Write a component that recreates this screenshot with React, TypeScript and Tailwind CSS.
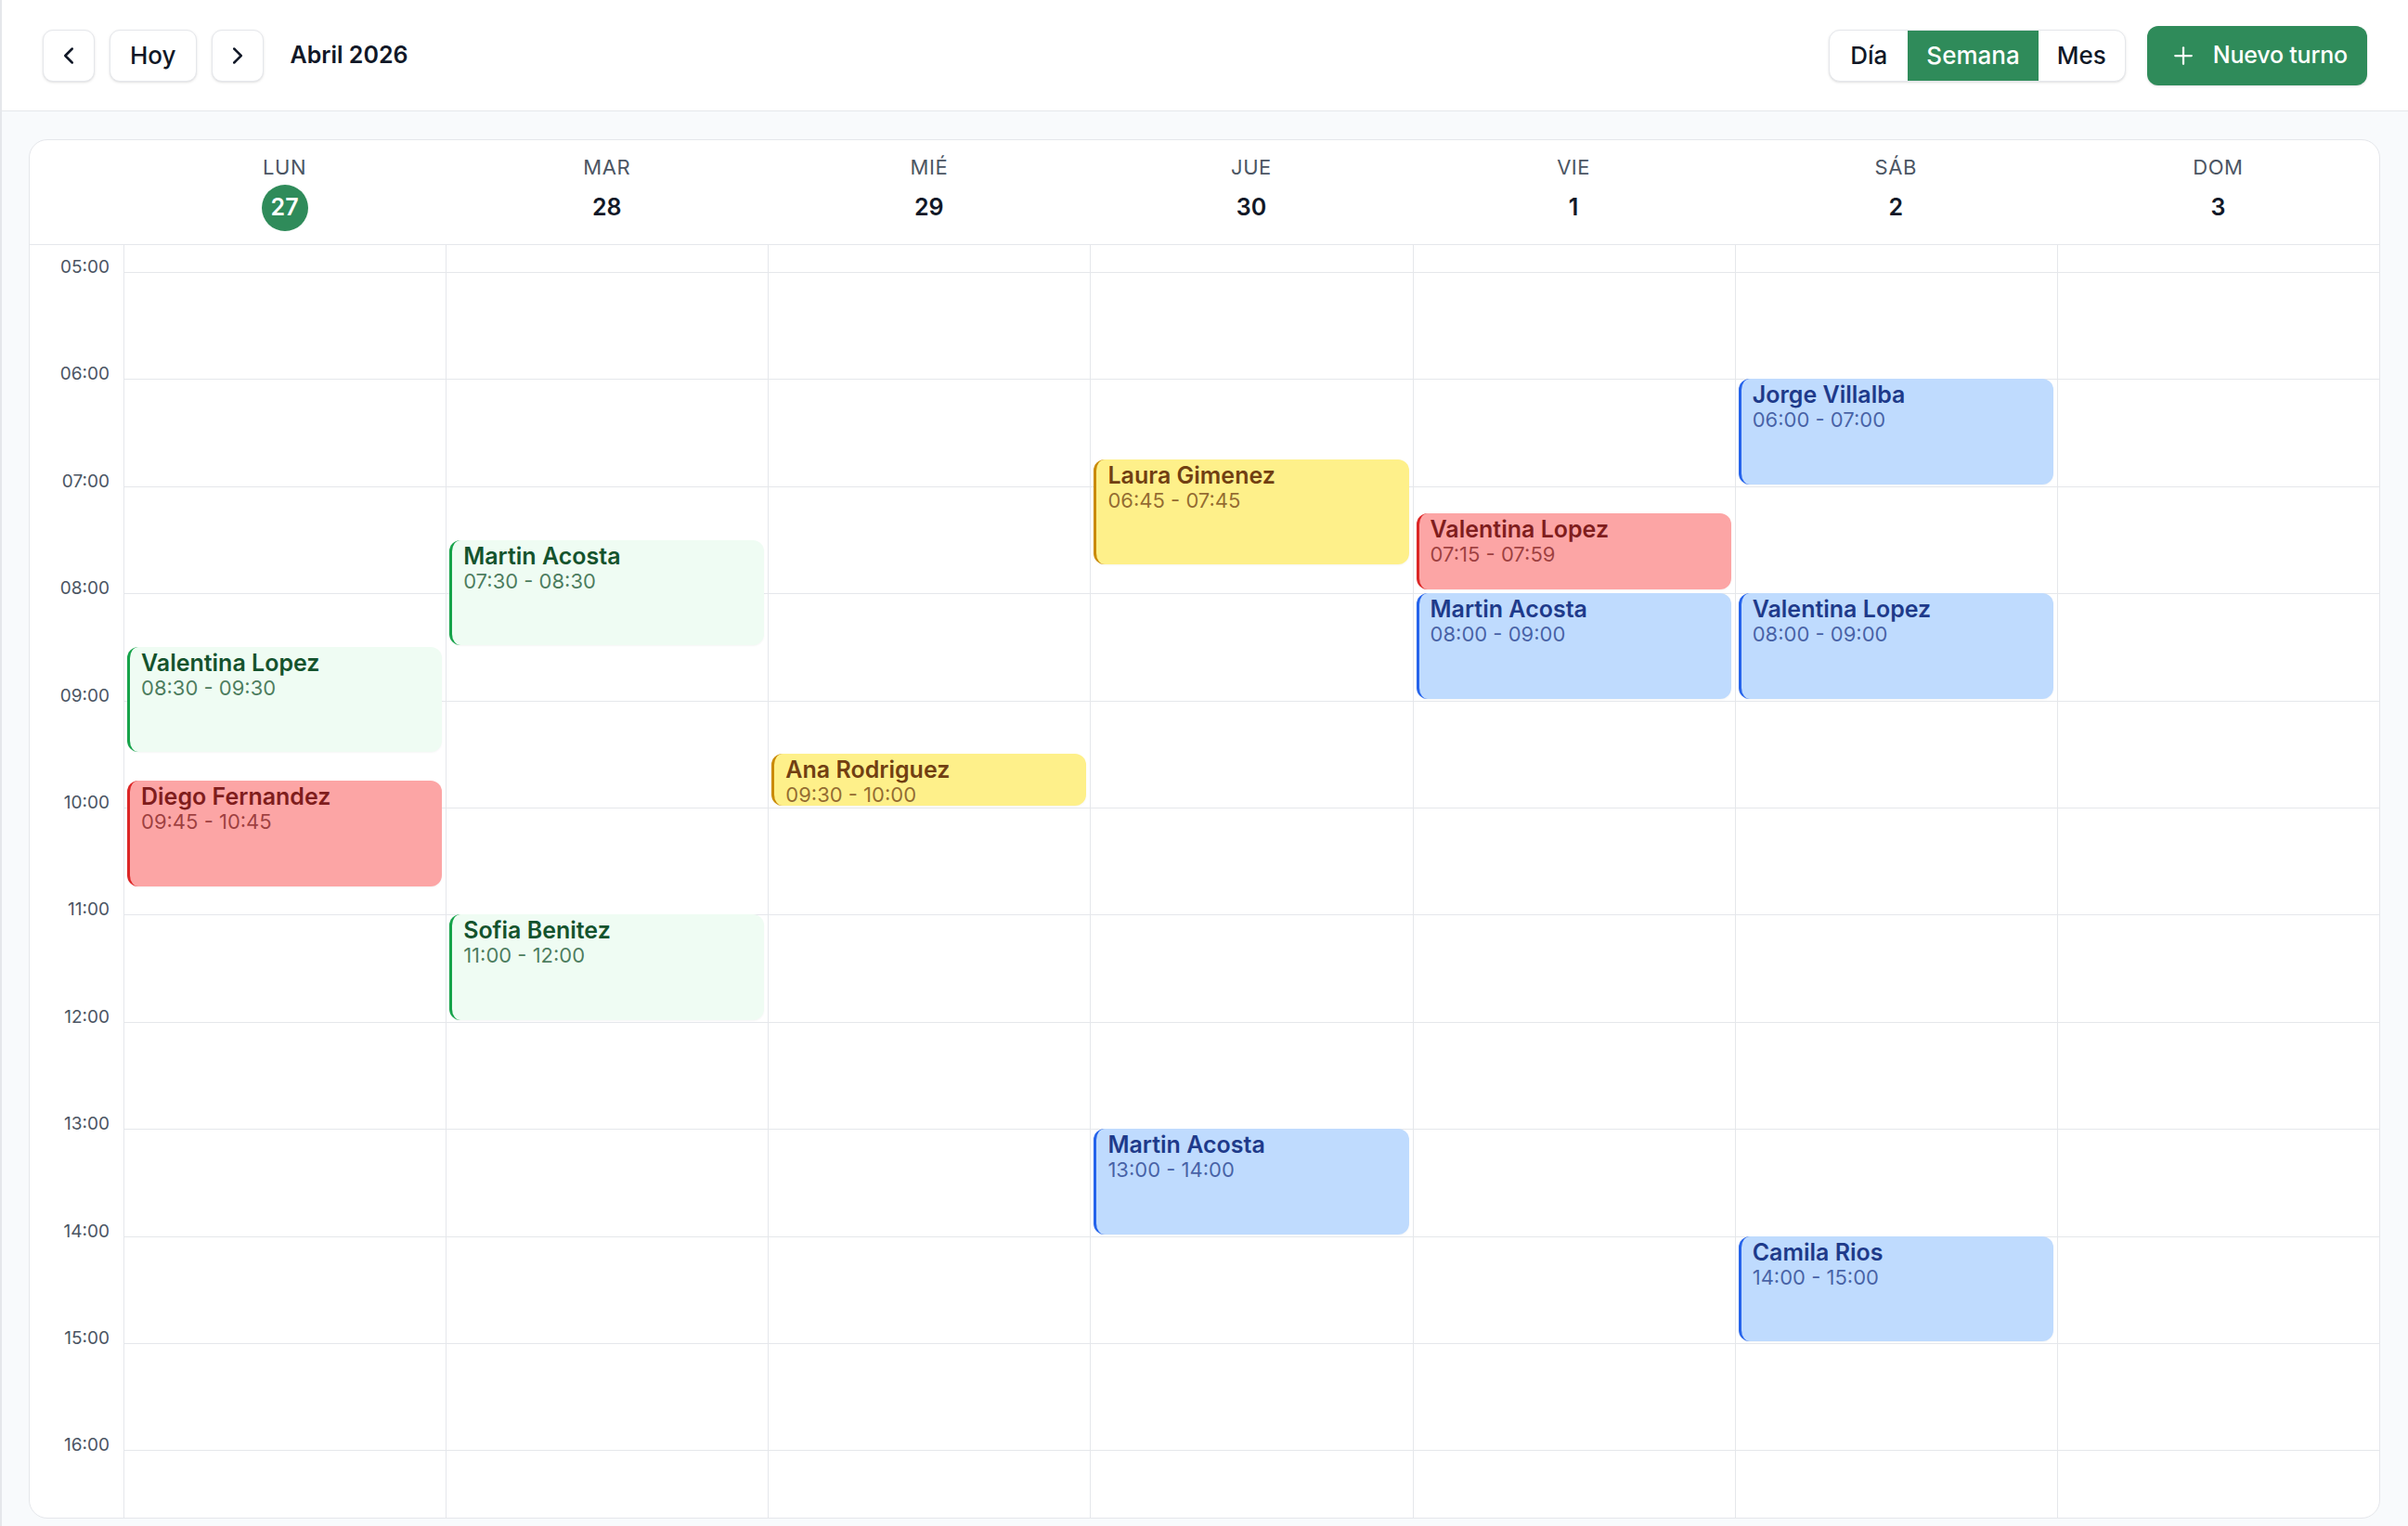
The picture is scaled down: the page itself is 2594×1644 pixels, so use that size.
import { ChevronLeft, ChevronRight, Plus } from "lucide-react";

type Tone = "green" | "red" | "yellow" | "blue";

interface Turno {
  day: number;
  name: string;
  start: string;
  end: string;
  tone: Tone;
}

const HOUR = 115.4;
const GRID_TOP = 29;
const FIRST_HOUR = 5;

const days = [
  { label: "LUN", num: "27", today: true },
  { label: "MAR", num: "28" },
  { label: "MIÉ", num: "29" },
  { label: "JUE", num: "30" },
  { label: "VIE", num: "1" },
  { label: "SÁB", num: "2" },
  { label: "DOM", num: "3" },
];

const hours = ["05:00", "06:00", "07:00", "08:00", "09:00", "10:00", "11:00", "12:00", "13:00", "14:00", "15:00", "16:00"];

const turnos: Turno[] = [
  { day: 0, name: "Valentina Lopez", start: "08:30", end: "09:30", tone: "green" },
  { day: 0, name: "Diego Fernandez", start: "09:45", end: "10:45", tone: "red" },
  { day: 1, name: "Martin Acosta", start: "07:30", end: "08:30", tone: "green" },
  { day: 1, name: "Sofia Benitez", start: "11:00", end: "12:00", tone: "green" },
  { day: 2, name: "Ana Rodriguez", start: "09:30", end: "10:00", tone: "yellow" },
  { day: 3, name: "Laura Gimenez", start: "06:45", end: "07:45", tone: "yellow" },
  { day: 3, name: "Martin Acosta", start: "13:00", end: "14:00", tone: "blue" },
  { day: 4, name: "Valentina Lopez", start: "07:15", end: "07:59", tone: "red" },
  { day: 4, name: "Martin Acosta", start: "08:00", end: "09:00", tone: "blue" },
  { day: 5, name: "Jorge Villalba", start: "06:00", end: "07:00", tone: "blue" },
  { day: 5, name: "Valentina Lopez", start: "08:00", end: "09:00", tone: "blue" },
  { day: 5, name: "Camila Rios", start: "14:00", end: "15:00", tone: "blue" },
];

const toneClasses: Record<Tone, { box: string; name: string; time: string }> = {
  green: {
    box: "bg-[#effcf3] border-[#16a34a]",
    name: "text-[#14532d]",
    time: "text-[#14532d]/75",
  },
  red: {
    box: "bg-[#fca5a5] border-[#dc2626]",
    name: "text-[#7f1d1d]",
    time: "text-[#7f1d1d]/75",
  },
  yellow: {
    box: "bg-[#fef08a] border-[#ca8a04]",
    name: "text-[#713f12]",
    time: "text-[#713f12]/75",
  },
  blue: {
    box: "bg-[#bfdbfe] border-[#2563eb]",
    name: "text-[#1e3a8a]",
    time: "text-[#1e3a8a]/75",
  },
};

const toHours = (t: string) => {
  const [h, m] = t.split(":").map(Number);
  return h + m / 60;
};

const TurnoCard = ({ turno }: { turno: Turno }) => {
  const s = toHours(turno.start);
  const e = toHours(turno.end);
  const c = toneClasses[turno.tone];
  return (
    <div
      className={`absolute left-[3px] right-[4px] rounded-[12px] border-l-[3px] pl-[12px] pt-[3px] overflow-hidden shadow-[0_1px_2px_rgba(0,0,0,0.04)] ${c.box}`}
      style={{ top: GRID_TOP + (s - FIRST_HOUR) * HOUR, height: (e - s) * HOUR - 2 }}
    >
      <div className={`text-[25px] leading-[28px] font-semibold whitespace-nowrap ${c.name}`}>{turno.name}</div>
      <div className={`text-[22px] leading-[26px] whitespace-nowrap ${c.time}`}>
        {turno.start} - {turno.end}
      </div>
    </div>
  );
};

const App = () => {
  return (
    <div className="w-full h-[1644px] overflow-hidden bg-[#f8fafc] border-l-2 border-gray-200 flex flex-col font-['Inter',sans-serif] text-[#111827]">
      {/* barra superior */}
      <header className="h-[120px] shrink-0 bg-white border-b border-gray-200 flex items-center justify-between pl-[44px] pr-[44px]">
        <div className="flex items-center gap-[16px]">
          <button className="w-[56px] h-[56px] flex items-center justify-center rounded-[11px] border border-gray-200 bg-white shadow-sm">
            <ChevronLeft size={30} strokeWidth={2} />
          </button>
          <button className="h-[56px] px-[21px] flex items-center rounded-[11px] border border-gray-200 bg-white shadow-sm text-[26px] font-medium">
            Hoy
          </button>
          <button className="w-[56px] h-[56px] flex items-center justify-center rounded-[11px] border border-gray-200 bg-white shadow-sm">
            <ChevronRight size={30} strokeWidth={2} />
          </button>
          <h1 className="ml-[13px] text-[25px] font-semibold">Abril 2026</h1>
        </div>
        <div className="flex items-center gap-[23px]">
          <div className="h-[56px] flex rounded-[12px] border border-gray-200 bg-white shadow-sm overflow-hidden text-[26px] font-medium">
            <button className="px-[22px] flex items-center">Día</button>
            <button className="px-[20px] flex items-center bg-[#2f8b5a] text-white">Semana</button>
            <button className="px-[20px] flex items-center">Mes</button>
          </div>
          <button className="h-[64px] pl-[24px] pr-[21px] flex items-center gap-[17px] rounded-[12px] bg-[#2f8b5a] text-white text-[25px] tracking-[-0.2px] font-medium shadow-sm">
            <Plus size={30} strokeWidth={1.8} />
            Nuevo turno
          </button>
        </div>
      </header>

      {/* calendario semanal */}
      <main className="flex-1 min-h-0 pt-[30px] pb-[8px] pl-[29px] pr-[30px]">
        <div className="h-full flex flex-col bg-white border border-gray-200 rounded-[20px] overflow-hidden">
          <div className="h-[113px] shrink-0 grid grid-cols-[101px_repeat(7,1fr)] border-b border-gray-200">
            <div />
            {days.map((d) => (
              <div key={d.label} className="flex flex-col items-center pt-[15px]">
                <span className="text-[22px] leading-[28px] tracking-wide text-[#4b5563]">{d.label}</span>
                <span
                  className={`mt-[5px] w-[50px] h-[50px] flex items-center justify-center rounded-full text-[25px] font-semibold ${
                    d.today ? "bg-[#2f8b5a] text-white" : "text-[#111827]"
                  }`}
                >
                  {d.num}
                </span>
              </div>
            ))}
          </div>

          <div className="flex-1 min-h-0 grid grid-cols-[101px_repeat(7,1fr)] overflow-hidden">
            <div className="pt-[12px]">
              {hours.map((h) => (
                <div key={h} className="h-[115.4px] pr-[15px] text-right text-[19px] leading-[23px] text-[#4b5563]">
                  {h}
                </div>
              ))}
            </div>
            {days.map((d, i) => (
              <div key={d.label} className="relative border-l border-gray-200 pt-[29px]">
                {hours.map((h) => (
                  <div key={h} className="h-[115.4px] border-t border-gray-200" />
                ))}
                {turnos
                  .filter((t) => t.day === i)
                  .map((t) => (
                    <TurnoCard key={t.name + t.start} turno={t} />
                  ))}
              </div>
            ))}
          </div>
        </div>
      </main>
    </div>
  );
};

export default App;
